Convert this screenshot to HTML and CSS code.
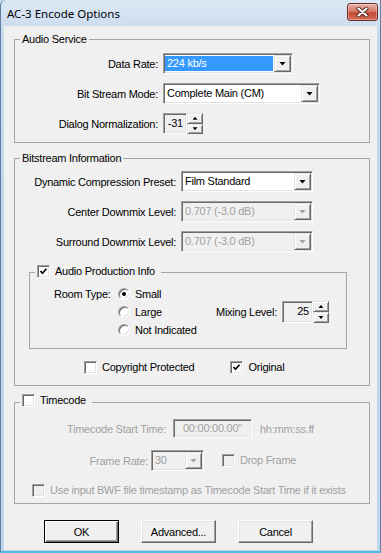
FILE: index.html
```html
<!DOCTYPE html>
<html lang="en">
<head>
    <meta charset="UTF-8">
    <meta name="viewport" content="width=device-width, initial-scale=1.0">
    <title>AC-3 Encode Options</title>

    <link rel="stylesheet" href="styles.css">
</head>
<body>

<div class="window">

    <div class="titlebar">
        <span class="title">AC-3 Encode Options</span>
        <span class="close-btn">
            <svg width="13" height="10" viewBox="0 0 13 10"><path d="M2.5 1.5l8 7M10.5 1.5l-8 7" stroke="#4a1c16" stroke-width="4" stroke-linecap="round"/><path d="M2.5 1.5l8 7M10.5 1.5l-8 7" stroke="#fff" stroke-width="2.2" stroke-linecap="round"/></svg>
        </span>
    </div>

    <div class="client">

        <fieldset class="group group-audio">
            <legend>Audio Service</legend>
            <div class="row">
                <span class="label lbl-audio">Data Rate:</span>
                <div class="combo w-rate">
                    <span class="combo-value selected">224 kb/s</span>
                    <span class="drop"><i class="arrow"></i></span>
                </div>
            </div>
            <div class="row">
                <span class="label lbl-audio">Bit Stream Mode:</span>
                <div class="combo w-mode">
                    <span class="combo-value">Complete Main (CM)</span>
                    <span class="drop"><i class="arrow"></i></span>
                </div>
            </div>
            <div class="row">
                <span class="label lbl-audio">Dialog Normalization:</span>
                <div class="spin-edit">
                    <span class="edit w-dialnorm">-31</span>
                    <span class="spin">
                        <span class="spin-btn"><i class="tri-up"></i></span>
                        <span class="spin-btn"><i class="tri-down"></i></span>
                    </span>
                </div>
            </div>
        </fieldset>

        <fieldset class="group group-bitstream">
            <legend>Bitstream Information</legend>
            <div class="row">
                <span class="label lbl-bits">Dynamic Compression Preset:</span>
                <div class="combo w-bits">
                    <span class="combo-value">Film Standard</span>
                    <span class="drop"><i class="arrow"></i></span>
                </div>
            </div>
            <div class="row">
                <span class="label lbl-bits">Center Downmix Level:</span>
                <div class="combo w-bits disabled">
                    <span class="combo-value">0.707 (-3.0 dB)</span>
                    <span class="drop"><i class="arrow"></i></span>
                </div>
            </div>
            <div class="row">
                <span class="label lbl-bits">Surround Downmix Level:</span>
                <div class="combo w-bits disabled">
                    <span class="combo-value">0.707 (-3.0 dB)</span>
                    <span class="drop"><i class="arrow"></i></span>
                </div>
            </div>

            <fieldset class="group group-production">
                <legend class="check-legend">
                    <span class="check-label">
                        <span class="checkbox"><svg width="9" height="9" viewBox="0 0 9 9"><path d="M1.5 4l2 2.2L7.5 1.8" stroke="#000" stroke-width="1.7" fill="none"/></svg></span>
                        Audio Production Info
                    </span>
                </legend>
                <div class="production-body">
                    <span class="room-label">Room Type:</span>
                    <div class="radio-list">
                        <span class="radio-item"><span class="radio checked"></span>Small</span>
                        <span class="radio-item"><span class="radio"></span>Large</span>
                        <span class="radio-item"><span class="radio"></span>Not Indicated</span>
                    </div>
                    <div class="mixing">
                        <span class="mixing-label">Mixing Level:</span>
                        <div class="spin-edit tall">
                            <span class="edit w-mixing">25</span>
                            <span class="spin">
                                <span class="spin-btn"><i class="tri-up"></i></span>
                                <span class="spin-btn"><i class="tri-down"></i></span>
                            </span>
                        </div>
                    </div>
                </div>
            </fieldset>

            <div class="flags">
                <span class="check-label copyright">
                    <span class="checkbox"></span>
                    Copyright Protected
                </span>
                <span class="check-label original">
                    <span class="checkbox"><svg width="9" height="9" viewBox="0 0 9 9"><path d="M1.5 4l2 2.2L7.5 1.8" stroke="#000" stroke-width="1.7" fill="none"/></svg></span>
                    Original
                </span>
            </div>
        </fieldset>

        <fieldset class="group group-timecode">
            <legend class="check-legend">
                <span class="check-label">
                    <span class="checkbox"></span>
                    Timecode
                </span>
            </legend>
            <div class="row row-start disabled-text">
                <span class="label lbl-start">Timecode Start Time:</span>
                <span class="edit w-start centered">00:00:00.00"</span>
                <span class="hint">hh:mm:ss.ff</span>
            </div>
            <div class="row row-rate disabled-text">
                <span class="label lbl-rate">Frame Rate:</span>
                <div class="combo w-rate-small disabled">
                    <span class="combo-value">30</span>
                    <span class="drop"><i class="arrow"></i></span>
                </div>
                <span class="check-label drop-frame">
                    <span class="checkbox disabled"></span>
                    Drop Frame
                </span>
            </div>
            <div class="row row-bwf disabled-text">
                <span class="check-label">
                    <span class="checkbox disabled"></span>
                    Use input BWF file timestamp as Timecode Start Time if it exists
                </span>
            </div>
        </fieldset>

        <div class="buttons">
            <button class="btn default">OK</button>
            <button class="btn">Advanced...</button>
            <button class="btn">Cancel</button>
        </div>

    </div>
</div>

</body>
</html>
```

FILE: styles.css
```css
* {
    margin: 0;
    padding: 0;
    box-sizing: border-box;
}

body {
    width: 381px;
    height: 553px;
    overflow: hidden;
    font-family: "Liberation Sans", Arial, sans-serif;
    font-size: 11px;
    letter-spacing: -0.25px;
    color: #000;
    background: #c6d8ec;
}

.window {
    height: 553px;
    display: flex;
    flex-direction: column;
    border-left: 1px solid #5d7ea5;
    border-right: 1px solid #5d7ea5;
    border-bottom: 2px solid #4fbbe0;
    border-top-left-radius: 6px;
    background: linear-gradient(#dce8f5, #c6d8ec 40px, #bfd3ea);
}

/* title bar */
.titlebar {
    height: 26px;
    flex-shrink: 0;
    display: flex;
    align-items: center;
    justify-content: space-between;
    padding: 0 2px 0 6px;
}

.title {
    font-family: "Noto Sans", sans-serif;
    font-size: 11.5px;
    letter-spacing: 0;
    color: #000;
    margin-top: 1px;
}

.close-btn {
    width: 31px;
    height: 18px;
    margin-top: -3px;
    display: flex;
    align-items: center;
    justify-content: center;
    border: 1px solid #6a2b22;
    border-radius: 3px;
    background: linear-gradient(#eab3a9, #d77a68 45%, #c44a33 55%, #d46b55);
    box-shadow: inset 0 0 0 1px rgba(255, 255, 255, 0.35);
}

/* client area */
.client {
    flex: 1;
    margin: 0 3px 1px 3px;
    padding: 7px 7px 0 10px;
    background: #f0f0f0;
    display: flex;
    flex-direction: column;
}

.group {
    border: 1px solid #a5a5a5;
    min-width: 0;
}

.group legend {
    margin-left: 5px;
    padding: 0 2px;
    line-height: 13px;
}

.group-audio {
    padding: 7px 0 8px 0;
}

.group-bitstream {
    margin-top: 9px;
    padding: 6px 0 11px 0;
}

.group-production {
    margin: 13px 22px 0 14px;
    padding: 6px 0 9px 0;
}

.group-timecode {
    margin-top: 8px;
    padding: 9px 0 6px 0;
}

.check-legend {
    padding-right: 6px !important;
}

.row {
    display: flex;
    align-items: center;
    height: 21px;
}

.row + .row {
    margin-top: 9px;
}

.label {
    text-align: right;
    white-space: nowrap;
    flex-shrink: 0;
}

.lbl-audio { width: 143px; margin-right: 5px; }
.lbl-bits { width: 161px; margin-right: 5px; }
.lbl-start { width: 151px; margin-right: 7px; }
.lbl-rate { width: 133px; margin-right: 3px; }

/* sunken 3d frame shared by combo and edit */
.combo,
.edit {
    border: 1px solid;
    border-color: #a0a0a0 #fff #fff #a0a0a0;
    box-shadow: inset 1px 1px 0 #696969, inset -1px -1px 0 #e3e3e3;
    padding: 1px;
}

.combo {
    height: 21px;
    display: flex;
    background: #fff;
}

.combo-value {
    flex: 1;
    padding-left: 2px;
    line-height: 17px;
    white-space: nowrap;
    overflow: hidden;
}

.combo-value.selected {
    margin: 1px 1px 1px 0;
    line-height: 15px;
    padding-left: 2px;
    background: #3399ff;
    color: #fff;
}

.drop {
    width: 17px;
    height: 17px;
    flex-shrink: 0;
    display: flex;
    align-items: center;
    justify-content: center;
    background: #f0f0f0;
    border: 1px solid;
    border-color: #e3e3e3 #696969 #696969 #e3e3e3;
    box-shadow: inset 1px 1px 0 #fff, inset -1px -1px 0 #a0a0a0;
}

.arrow {
    width: 7px;
    height: 4px;
    background: #000;
    clip-path: polygon(0 0, 100% 0, 50% 100%);
}

.combo.disabled {
    background: #f0f0f0;
}

.combo.disabled .combo-value {
    color: #a0a0a0;
}

.combo.disabled .arrow {
    background: #a0a0a0;
}

.w-rate { width: 130px; }
.w-mode { width: 157px; }
.w-bits { width: 132px; }
.w-rate-small { width: 53px; }

/* edits and spinners */
.spin-edit {
    display: flex;
    height: 21px;
}

.spin-edit.tall {
    height: 22px;
}

.edit {
    display: block;
    background: #f0f0f0;
    text-align: right;
    padding-right: 3px;
    line-height: 17px;
}

.spin-edit .edit {
    height: 100%;
}

.edit.centered {
    text-align: center;
    padding-right: 1px;
    height: 19px;
    line-height: 15px;
}

.w-dialnorm { width: 24px; }
.w-mixing { width: 31px; }
.w-start { width: 79px; }

.spin {
    width: 16px;
    display: flex;
    flex-direction: column;
}

.spin-btn {
    flex: 1;
    display: flex;
    align-items: center;
    justify-content: center;
    background: #f0f0f0;
    border: 1px solid;
    border-color: #e3e3e3 #696969 #696969 #e3e3e3;
    box-shadow: inset 1px 1px 0 #fff, inset -1px -1px 0 #a0a0a0;
}

.tri-up,
.tri-down {
    width: 5px;
    height: 3px;
    background: #000;
}

.tri-up { clip-path: polygon(50% 0, 100% 100%, 0 100%); }
.tri-down { clip-path: polygon(0 0, 100% 0, 50% 100%); }

/* checkboxes and radios */
.check-label {
    display: inline-flex;
    align-items: center;
    gap: 5px;
    line-height: 13px;
    white-space: nowrap;
}

.checkbox {
    width: 13px;
    height: 13px;
    flex-shrink: 0;
    display: flex;
    align-items: center;
    justify-content: center;
    background: #fff;
    border: 1px solid;
    border-color: #a0a0a0 #fff #fff #a0a0a0;
    box-shadow: inset 1px 1px 0 #696969, inset -1px -1px 0 #e3e3e3;
}

.checkbox.disabled {
    background: #f0f0f0;
}

.production-body {
    display: flex;
    padding-left: 24px;
}

.room-label {
    width: 64px;
    line-height: 18px;
}

.radio-list {
    width: 98px;
    display: flex;
    flex-direction: column;
}

.radio-item {
    height: 18px;
    display: flex;
    align-items: center;
    gap: 5px;
}

.radio {
    width: 12px;
    height: 12px;
    border-radius: 50%;
    display: flex;
    align-items: center;
    justify-content: center;
    background: #fff;
    border: 1px solid;
    border-color: #a0a0a0 #fff #fff #a0a0a0;
    box-shadow: inset 1px 1px 0 #696969, inset -1px -1px 0 #e3e3e3;
}

.radio.checked::after {
    content: "";
    width: 4px;
    height: 4px;
    border-radius: 50%;
    background: #000;
}

.mixing {
    display: flex;
    align-items: center;
    gap: 5px;
    height: 22px;
    margin-top: 16px;
}

.flags {
    display: flex;
    margin-top: 12px;
    padding-left: 69px;
}

.original {
    margin-left: 36px;
}

.disabled-text {
    color: #a0a0a0;
}

.hint {
    margin-left: 8px;
}

.drop-frame {
    margin-left: 18px;
}

.row-rate + .row-bwf {
    margin-top: 13px;
    height: 13px;
}

.row-start {
    height: 19px;
}

.row-start + .row-rate {
    margin-top: 12px;
}

.row-bwf {
    padding-left: 17px;
}

/* push buttons */
.buttons {
    display: flex;
    gap: 22px;
    margin-top: 16px;
    padding-left: 30px;
}

.btn {
    width: 75px;
    height: 23px;
    font-family: "Liberation Sans", Arial, sans-serif;
    font-size: 11px;
    letter-spacing: -0.25px;
    color: #000;
    background: #f0f0f0;
    border: 1px solid;
    border-color: #fff #696969 #696969 #fff;
    box-shadow: inset -1px -1px 0 #a0a0a0, inset 1px 1px 0 #e3e3e3;
}

.btn.default {
    border: 1px solid #000;
    box-shadow: inset 1px 1px 0 #fff, inset -1px -1px 0 #696969, inset -2px -2px 0 #a0a0a0;
}
```
